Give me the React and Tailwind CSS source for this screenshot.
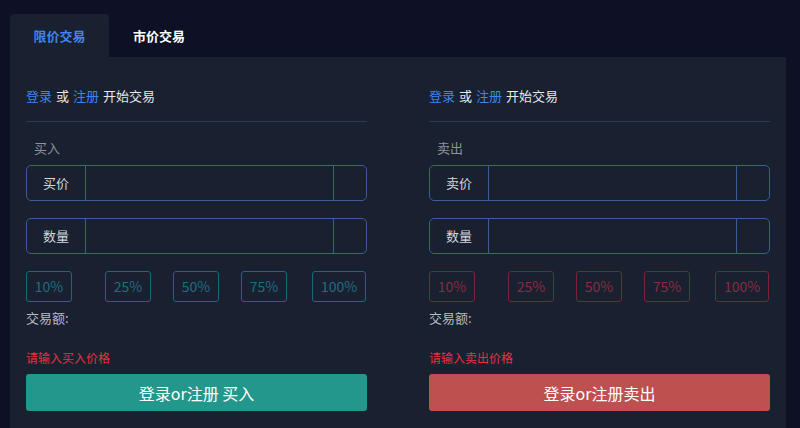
import React from 'react';

const PCTS = [
  { label: '10%', w: 'w-[46px]', ml: 'ml-0' },
  { label: '25%', w: 'w-[46px]', ml: 'ml-[33px]' },
  { label: '50%', w: 'w-[46px]', ml: 'ml-[22px]' },
  { label: '75%', w: 'w-[46px]', ml: 'ml-[22px]' },
  { label: '100%', w: 'w-[54px]', ml: 'ml-[25px]' },
];

const InputRow = ({ label, className }) => (
  <div className={'flex h-[36px] rounded-[5px] border border-[#3b5d99] ' + className}>
    <div className='w-[59px] shrink-0 flex items-center justify-center text-[13px] text-[#d3d7de] border-r border-[#3b5d99]'>
      {label}
    </div>
    <div className='flex-1' />
    <div className='w-[33px] shrink-0 border-l border-[#3b5d99]' />
  </div>
);

const TradeColumn = ({ side, priceLabel, buy }) => {
  const pctCls = buy
    ? 'border-[#146b7f] text-[#1f6d82]'
    : 'border-[#7b2337] text-[#8a2b41]';
  return (
    <div className='w-[341px] flex flex-col'>
      <div className='h-[20px] flex items-center text-[13px] text-[#e6e8ec]'>
        <span className='text-[#3f84f2]'>登录</span>
        <span className='mx-[4px]'>或</span>
        <span className='text-[#3f84f2]'>注册</span>
        <span className='ml-[4px]'>开始交易</span>
      </div>
      <div className='mt-[15px] h-px bg-[#2e3a52]' />
      <div className='mt-[16px] h-[20px] flex items-center pl-[8px] text-[13px] text-[#8d929b]'>{side}</div>
      <InputRow label={priceLabel} className='mt-[7px]' />
      <InputRow label='数量' className='mt-[17px]' />
      <div className='mt-[17px] flex'>
        {PCTS.map(p => (
          <div
            key={p.label}
            className={'h-[31px] rounded-[3px] border flex items-center justify-center text-[14px] ' + p.w + ' ' + p.ml + ' ' + pctCls}
          >
            {p.label}
          </div>
        ))}
      </div>
      <div className='mt-[6px] h-[20px] flex items-center text-[13px] text-[#b9bdc5]'>交易额:</div>
      <div className='mt-[20px] h-[20px] flex items-center text-[12px] text-[#e8323f]'>
        {buy ? '请输入买入价格' : '请输入卖出价格'}
      </div>
      <div
        className={
          'mt-[6px] h-[37px] rounded-[3px] flex items-center justify-center text-[16px] text-white ' +
          (buy ? 'bg-[#24978c]' : 'bg-[#be5050]')
        }
      >
        {buy ? '登录or注册 买入' : '登录or注册卖出'}
      </div>
    </div>
  );
};

export default function App() {
  return (
    <div
      className='w-[800px] h-[428px] overflow-hidden bg-[#0e1126] pt-[14px] pl-[10px] pr-[14px]'
      style={{ fontFamily: '"Noto Sans CJK SC", "Noto Sans", sans-serif' }}
    >
      <div className='flex h-[43px]'>
        <div className='w-[99px] rounded-t-[4px] bg-[#19202f] flex items-center justify-center text-[13px] font-bold text-[#3f84f2]'>
          限价交易
        </div>
        <div className='w-[100px] flex items-center justify-center text-[13px] font-bold text-white'>
          市价交易
        </div>
      </div>
      <div className='h-[400px] bg-[#19202f] pt-[29px] px-[16px] flex justify-between'>
        <TradeColumn side='买入' priceLabel='买价' buy />
        <TradeColumn side='卖出' priceLabel='卖价' />
      </div>
    </div>
  );
}
